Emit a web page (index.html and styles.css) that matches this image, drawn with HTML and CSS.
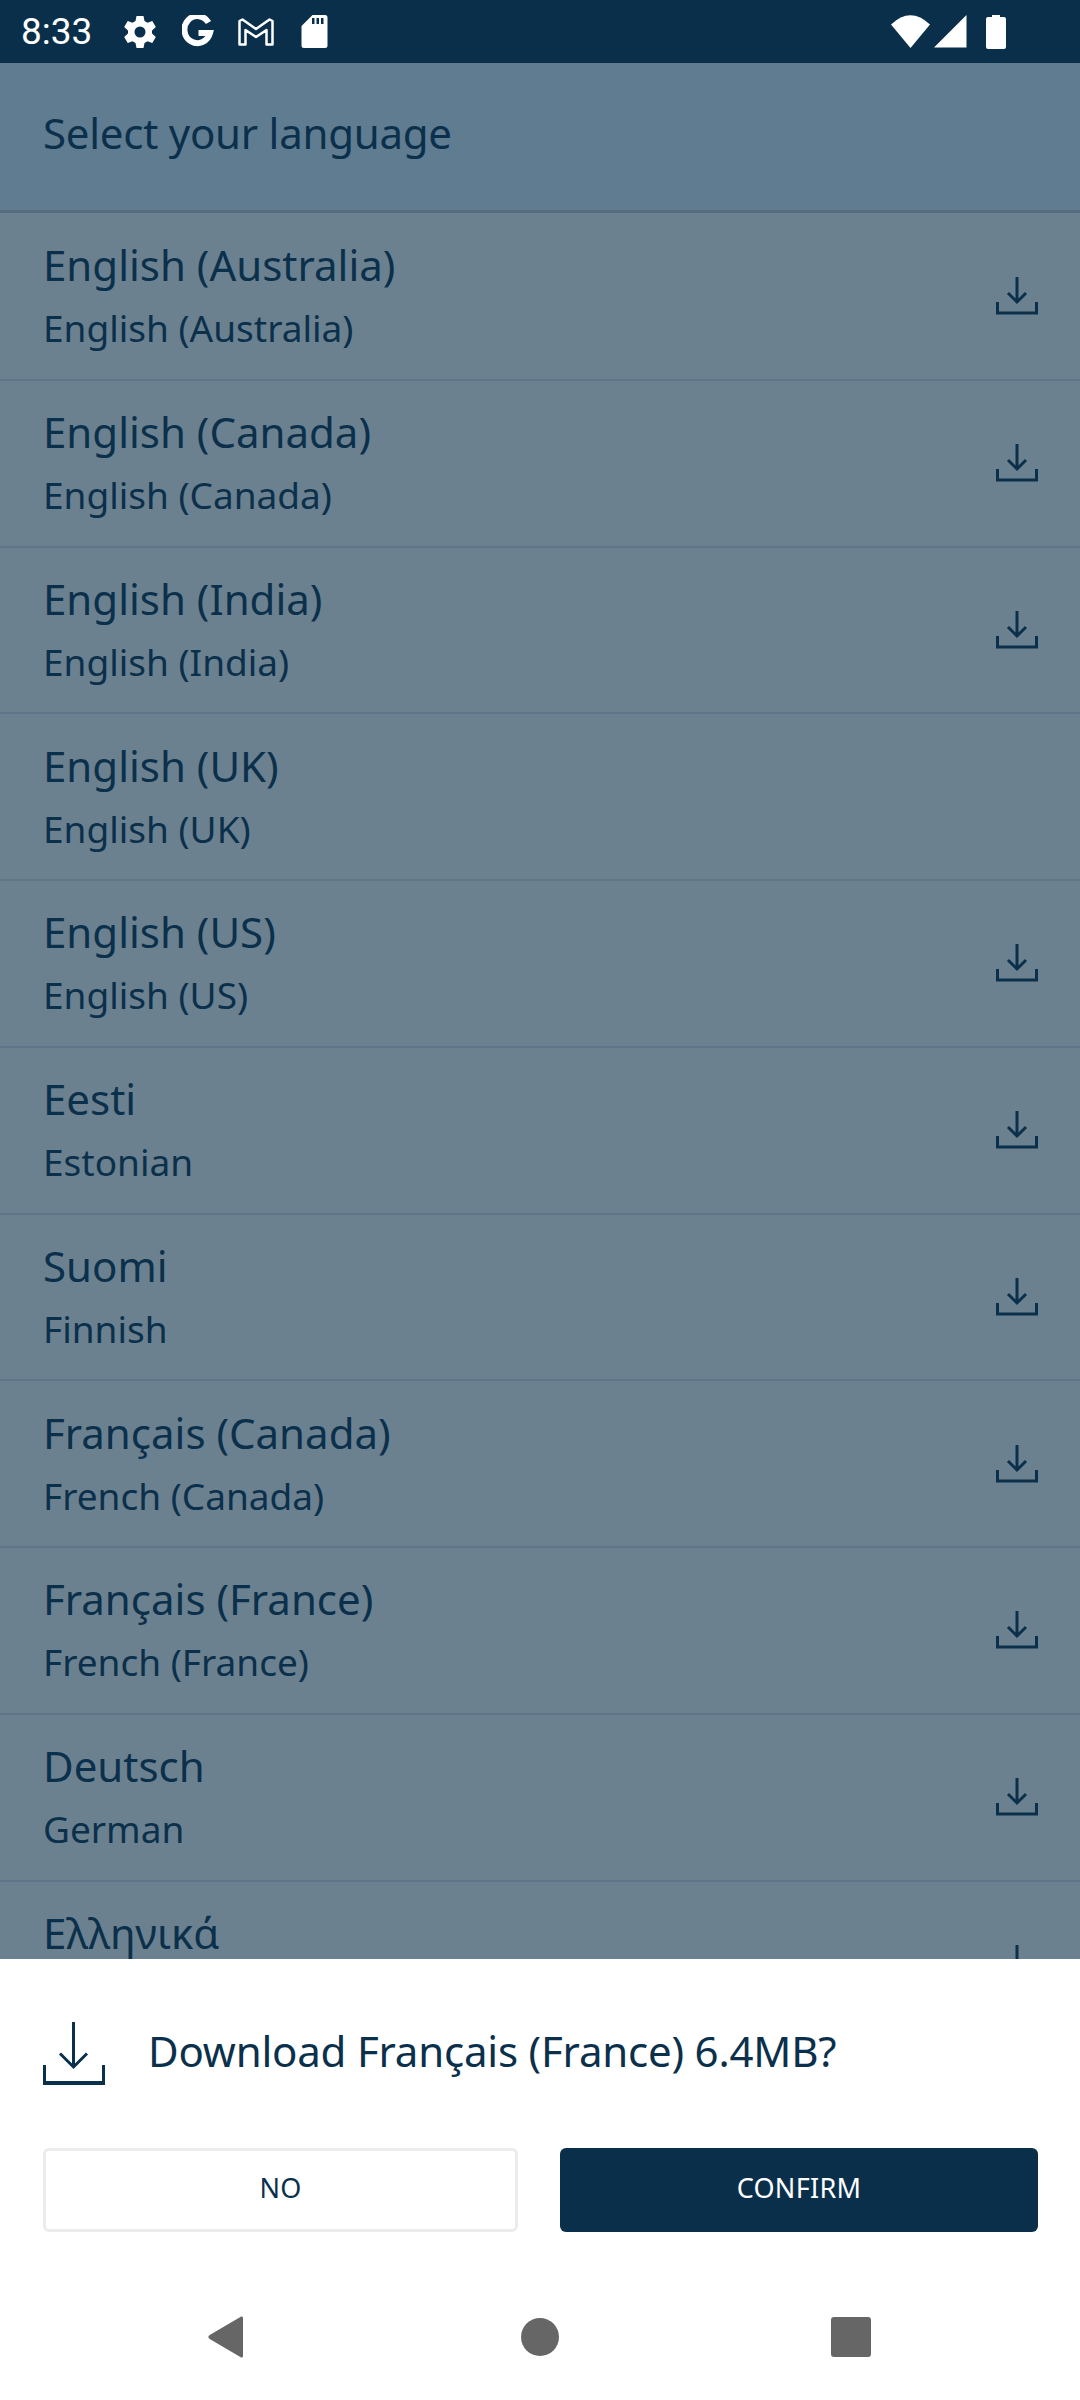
FILE: index.html
```html
<!DOCTYPE html>
<html lang="en">
<head>
    <meta charset="UTF-8">
    <title>Select your language</title>
    <link rel="stylesheet" href="styles.css">
</head>
<body>

<svg class="defs" width="0" height="0">
    <symbol id="dl" viewBox="0 0 42 38">
        <path d="M21 0V25M12 16L21 25L30 16M1.500 25V36H40.500V25" fill="none" stroke="#0b304b" stroke-width="3"/>
    </symbol>
</svg>

<div class="statusbar">
    <span class="time">8:33</span>
    <svg class="st-icon gear" viewBox="0 0 32 34"><path fill-rule="evenodd" fill="#fff" d="M12.500 1H19.500L20.500 6L23.500 7.700L28.300 6L31.800 12L28 15.400V18.600L31.800 22L28.300 28L23.500 26.300L20.500 28L19.500 33H12.500L11.500 28L8.500 26.300L3.700 28L.2 22L4 18.600V15.400L.2 12L3.700 6L8.500 7.700L11.500 6ZM16 11.500A5.500 5.500 0 1 0 16 22.500A5.500 5.500 0 1 0 16 11.500Z"/></svg>
    <svg class="st-icon goog" viewBox="0 0 32 34"><path fill="none" stroke="#fff" stroke-width="6" d="M26.500 7.500A13 13.500 0 1 0 28 18H16.500"/></svg>
    <svg class="st-icon gmail" viewBox="0 0 36 28"><path fill="none" stroke="#fff" stroke-width="2.500" stroke-linejoin="round" d="M1.500 3L4.500 1.500L18 11L31.500 1.500L34.500 3V26.500H28.500V12L18 19L7.500 12V26.500H1.500Z"/></svg>
    <svg class="st-icon sd" viewBox="0 0 26 33"><path fill-rule="evenodd" fill="#fff" d="M11 0H23.500Q26 0 26 2.500V30.500Q26 33 23.500 33H2.500Q0 33 0 30.500V11ZM10.500 3V9H13V3ZM15 3V9H17.500V3ZM19.500 3V9H22V3Z"/></svg>
    <span class="st-space"></span>
    <svg class="st-icon wifi" viewBox="0 0 39 33"><path fill="#fff" d="M0 9.500Q19.500 -9 39 9.500L19.500 33Z"/></svg>
    <svg class="st-icon signal" viewBox="0 0 33 33"><path fill="#fff" d="M32.500 0V32.500H0Z"/></svg>
    <svg class="st-icon battery" viewBox="0 0 20 34"><path fill="#fff" d="M6 0H14V2H18Q20 2 20 4V32Q20 34 18 34H2Q0 34 0 32V4Q0 2 2 2H6Z"/></svg>
</div>

<div class="header">Select your language</div>

<div class="list">
    <div class="row">
        <div class="names"><div class="name">English (Australia)</div><div class="sub">English (Australia)</div></div>
        <svg class="dl"><use href="#dl"/></svg>
    </div>
    <div class="row">
        <div class="names"><div class="name">English (Canada)</div><div class="sub">English (Canada)</div></div>
        <svg class="dl"><use href="#dl"/></svg>
    </div>
    <div class="row">
        <div class="names"><div class="name">English (India)</div><div class="sub">English (India)</div></div>
        <svg class="dl"><use href="#dl"/></svg>
    </div>
    <div class="row">
        <div class="names"><div class="name">English (UK)</div><div class="sub">English (UK)</div></div>
    </div>
    <div class="row">
        <div class="names"><div class="name">English (US)</div><div class="sub">English (US)</div></div>
        <svg class="dl"><use href="#dl"/></svg>
    </div>
    <div class="row">
        <div class="names"><div class="name">Eesti</div><div class="sub">Estonian</div></div>
        <svg class="dl"><use href="#dl"/></svg>
    </div>
    <div class="row">
        <div class="names"><div class="name">Suomi</div><div class="sub">Finnish</div></div>
        <svg class="dl"><use href="#dl"/></svg>
    </div>
    <div class="row">
        <div class="names"><div class="name">Français (Canada)</div><div class="sub">French (Canada)</div></div>
        <svg class="dl"><use href="#dl"/></svg>
    </div>
    <div class="row">
        <div class="names"><div class="name">Français (France)</div><div class="sub">French (France)</div></div>
        <svg class="dl"><use href="#dl"/></svg>
    </div>
    <div class="row">
        <div class="names"><div class="name">Deutsch</div><div class="sub">German</div></div>
        <svg class="dl"><use href="#dl"/></svg>
    </div>
    <div class="row">
        <div class="names"><div class="name">Ελληνικά</div><div class="sub">Greek</div></div>
        <svg class="dl"><use href="#dl"/></svg>
    </div>
</div>

<div class="sheet">
    <div class="prompt">
        <svg class="prompt-icon" viewBox="0 0 62 63"><path d="M30.500 0V45M17 31.500L30.500 45L44 31.500M1.500 43V60.500H60.500V43" fill="none" stroke="#0b304b" stroke-width="3"/><path d="M0 59H62V63H0Z" fill="#0b304b"/></svg>
        <span class="prompt-text">Download Français (France) 6.4MB?</span>
    </div>
    <div class="actions">
        <button class="btn btn-no">NO</button>
        <button class="btn btn-confirm">CONFIRM</button>
    </div>
</div>

<div class="navbar">
    <svg class="nav-icon nav-back" viewBox="0 0 40 42"><path fill="#666" d="M38 .5Q40 0 40 2V40Q40 42 38 41.500L3 23Q0 21 3 19Z" transform="matrix(.9 0 0 1 3 0)"/></svg>
    <svg class="nav-icon nav-home" viewBox="0 0 40 42"><circle cx="20" cy="21" r="19" fill="#666"/></svg>
    <svg class="nav-icon" viewBox="0 0 40 42"><rect x="0" y="1" width="40" height="40" rx="3" fill="#666"/></svg>
</div>

</body>
</html>
```

FILE: styles.css
```css
html, body {
    margin: 0;
    padding: 0;
    height: 2400px;
    overflow: hidden;
}
body {
    width: 1080px;
    display: flex;
    flex-direction: column;
    font-family: "Noto Sans", sans-serif;
    color: #0b304b;
    background-color: #fff;
}
.defs {
    position: absolute;
}

.statusbar {
    height: 63px;
    flex: none;
    display: flex;
    align-items: center;
    padding: 0 74px 0 21px;
    background-color: #0a2f4a;
    box-sizing: border-box;
}
.time {
    font-family: Roboto, sans-serif;
    font-size: 37px;
    color: #fff;
    width: 103px;
}
.st-icon {
    flex: none;
}
.gear { width: 32px; height: 34px; }
.goog { width: 32px; height: 34px; margin-left: 26px; }
.gmail { width: 36px; height: 28px; margin-left: 24px; }
.sd { width: 27px; height: 33px; margin-left: 27px; }
.st-space { flex: 1; }
.wifi { width: 39px; height: 33px; }
.signal { width: 33px; height: 33px; margin-left: 4px; }
.battery { width: 20px; height: 34px; margin-left: 19px; }

.header {
    height: 150px;
    flex: none;
    box-sizing: border-box;
    display: flex;
    align-items: center;
    padding: 0 43px 8px;
    background-color: #5f7c91;
    border-bottom: 3px solid #566d7f;
    font-size: 42px;
    letter-spacing: -.25px;
}

.list {
    flex: 1;
    min-height: 0;
    overflow: hidden;
    padding-top: 1px;
    background-color: #6c818f;
}
.row {
    height: 166.750px;
    box-sizing: border-box;
    display: flex;
    align-items: center;
    justify-content: space-between;
    padding: 0 42px 0 43px;
    border-bottom: 2px solid #5f7688;
}
.names {
    padding-bottom: 2px;
}
.name {
    font-size: 42px;
    line-height: 58px;
}
.sub {
    font-size: 37px;
    line-height: 52px;
    margin-top: 8px;
}
.dl {
    width: 42px;
    height: 38px;
    flex: none;
}

.sheet {
    flex: none;
    background-color: #fff;
    padding: 63px 42px 0 43px;
    height: 273px;
    box-sizing: border-box;
}
.prompt {
    display: flex;
    align-items: center;
    gap: 43px;
    font-size: 42px;
    letter-spacing: -.2px;
}
.prompt-icon {
    width: 62px;
    height: 63px;
    flex: none;
}
.prompt-text {
    margin-bottom: 6px;
}
.actions {
    display: flex;
    gap: 42px;
    margin-top: 63px;
}
.btn {
    height: 84px;
    box-sizing: border-box;
    border-radius: 6px;
    font-family: "Noto Sans", sans-serif;
    font-size: 27px;
    letter-spacing: .3px;
    padding: 0 0 5px;
}
.btn-no {
    width: 475px;
    flex: none;
    background-color: #fff;
    border: 3px solid #ececec;
    color: #0b304b;
}
.btn-confirm {
    flex: 1;
    background-color: #0a2f4a;
    border: none;
    color: #fff;
}

.navbar {
    height: 168px;
    flex: none;
    display: flex;
    align-items: center;
    justify-content: center;
    padding: 42px 209px 0 204px;
    box-sizing: border-box;
    background-color: #fff;
}
.nav-icon {
    width: 40px;
    height: 42px;
    flex: none;
}
.nav-back { margin-right: 276px; }
.nav-home { margin-right: 271px; }
```
